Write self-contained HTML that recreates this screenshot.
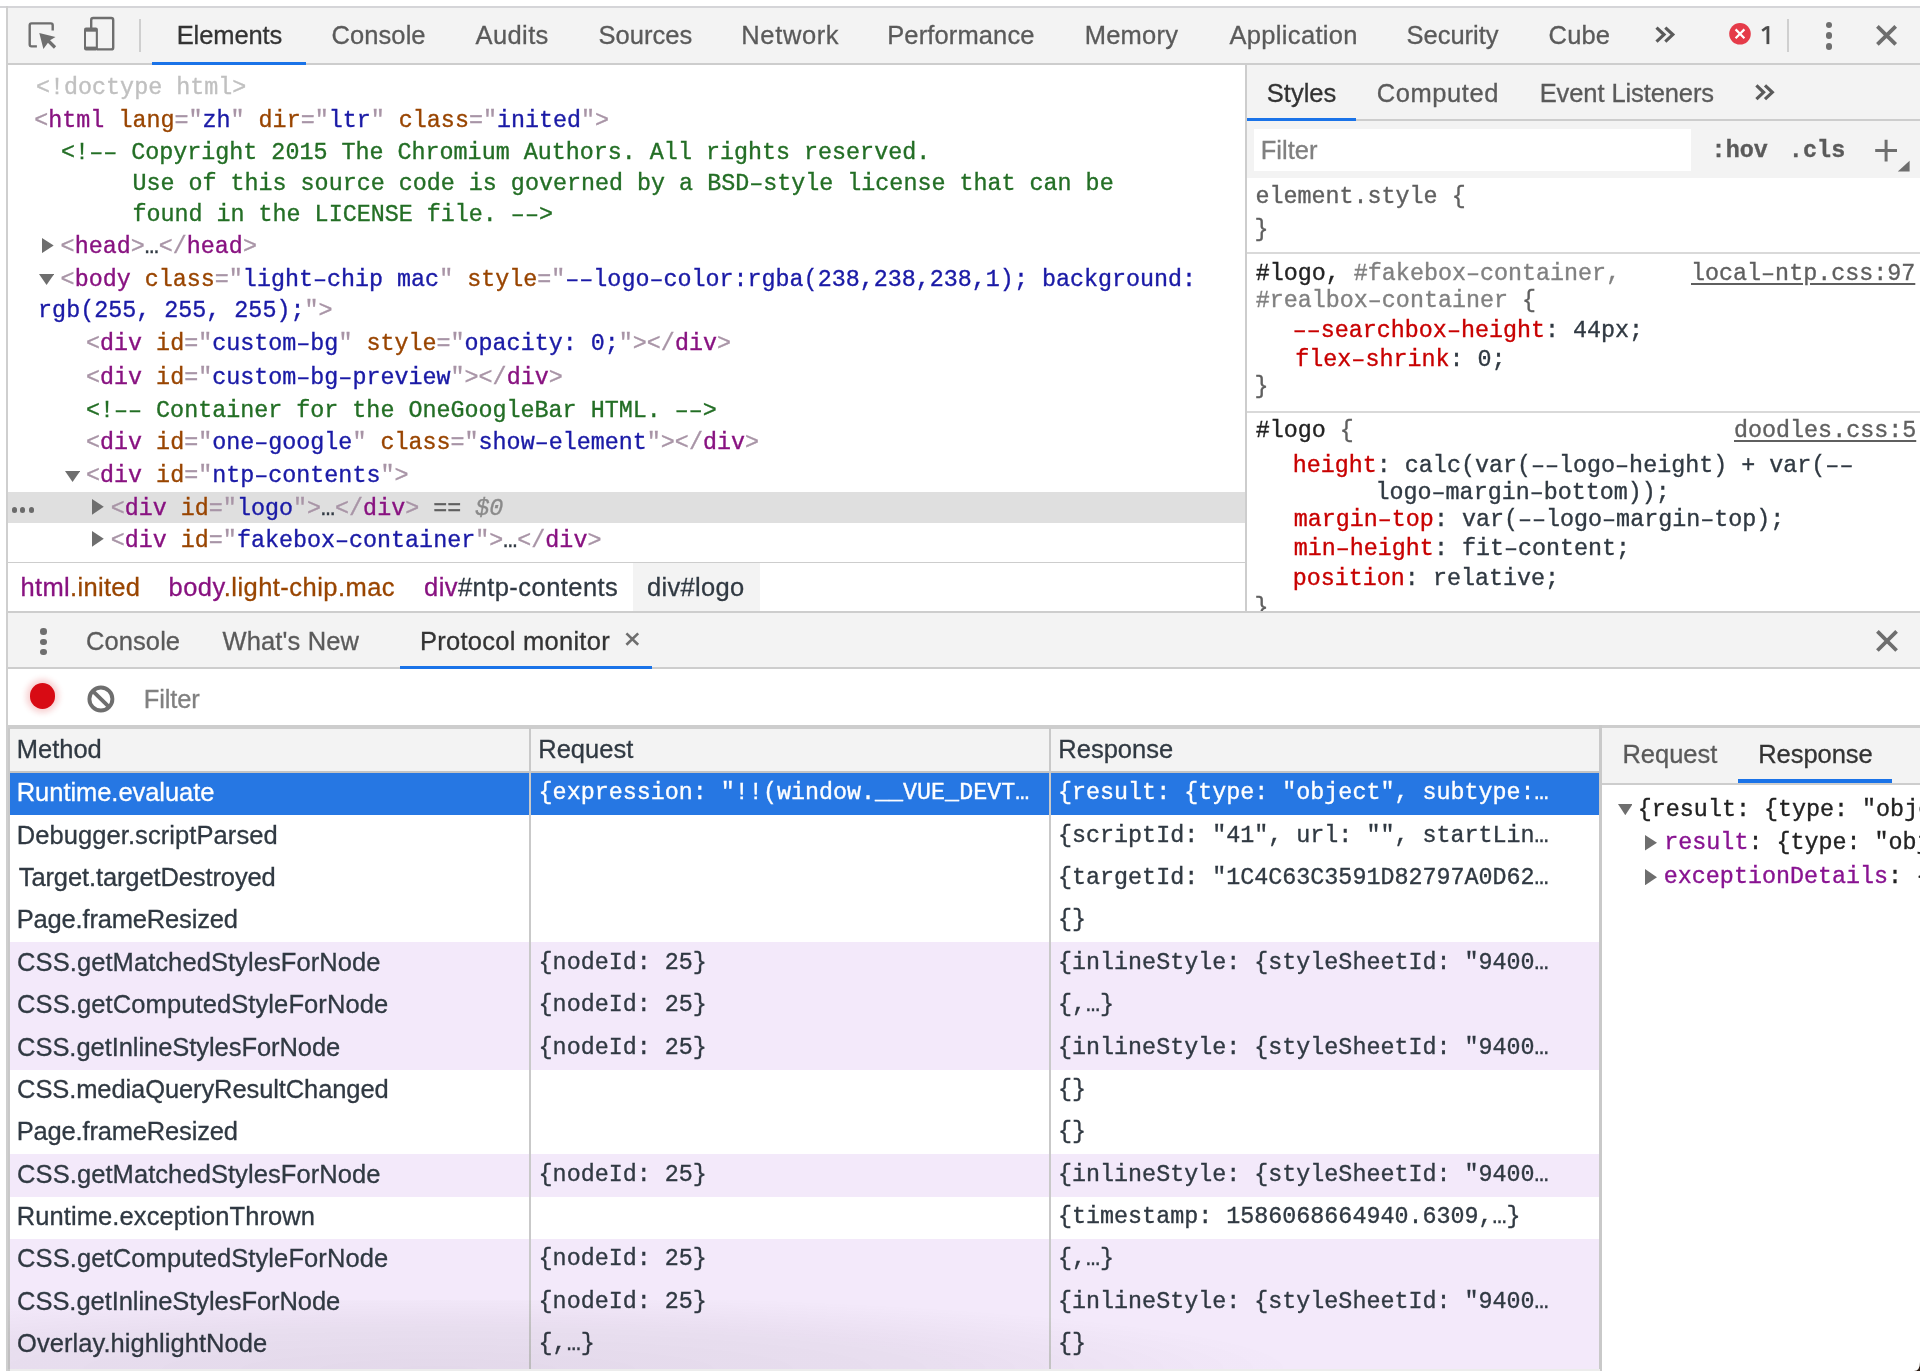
<!DOCTYPE html>
<html><head><meta charset="utf-8"><title>DevTools</title>
<style>
html,body{margin:0;padding:0;width:1920px;height:1371px;overflow:hidden;background:#fff}
body>div,body>svg{position:absolute}
.t{position:absolute;line-height:0;white-space:pre}
.m{-webkit-text-stroke-width:0.35px}
.s{-webkit-text-stroke-width:0.3px}
</style></head><body>
<div style="left:0px;top:0px;width:1920px;height:1371px;background:#ffffff;"></div>
<div style="left:0px;top:6px;width:1920px;height:2px;background:#d5d5d8;"></div>
<div style="left:6px;top:6px;width:2px;height:1365px;background:#cfcfcf;"></div>
<div style="left:8px;top:8px;width:1912px;height:55px;background:#f3f3f3;"></div>
<div style="left:8px;top:63px;width:1912px;height:2px;background:#cdcdcd;"></div>
<div style="left:152px;top:62px;width:154px;height:3px;background:#1a73e8;"></div>
<div style="left:1245px;top:65px;width:2px;height:547px;background:#cdcdcd;"></div>
<div style="left:1247px;top:65px;width:673px;height:54px;background:#f3f3f3;"></div>
<div style="left:1247px;top:119px;width:673px;height:2px;background:#cdcdcd;"></div>
<div style="left:1247px;top:118px;width:109px;height:3px;background:#1a73e8;"></div>
<div style="left:1247px;top:121px;width:673px;height:57px;background:#f3f3f3;"></div>
<div style="left:1254px;top:129px;width:437px;height:42px;background:#ffffff;"></div>
<div style="left:1247px;top:252px;width:673px;height:2px;background:#d9d9d9;"></div>
<div style="left:1247px;top:411px;width:673px;height:2px;background:#d9d9d9;"></div>
<div style="left:8px;top:492px;width:1237px;height:31px;background:#dfdfdf;"></div>
<div style="left:8px;top:561.6px;width:1237px;height:1.7px;background:#cdcdcd;"></div>
<div style="left:633px;top:563px;width:127px;height:48px;background:#f3f3f3;"></div>
<div style="left:8px;top:611px;width:1912px;height:2px;background:#cdcdcd;"></div>
<div style="left:8px;top:613px;width:1912px;height:54px;background:#f3f3f3;"></div>
<div style="left:8px;top:667px;width:1912px;height:2px;background:#cdcdcd;"></div>
<div style="left:400px;top:666px;width:252px;height:3px;background:#1a73e8;"></div>
<div style="left:8px;top:725px;width:1592px;height:4px;background:#cdcdcd;"></div>
<div style="left:1600px;top:725px;width:320px;height:3px;background:#cdcdcd;"></div>
<div style="left:8px;top:728px;width:2px;height:643px;background:#c9c9c9;"></div>
<div style="left:10px;top:729px;width:1590px;height:42px;background:#f3f3f3;"></div>
<div style="left:10px;top:771px;width:1590px;height:2px;background:#c4c4c4;"></div>
<div style="left:10px;top:773px;width:1590px;height:42px;background:#2677e3;"></div>
<div style="left:10px;top:942px;width:1590px;height:43px;background:#f3e9fa;"></div>
<div style="left:10px;top:985px;width:1590px;height:42px;background:#f3e9fa;"></div>
<div style="left:10px;top:1027px;width:1590px;height:43px;background:#f3e9fa;"></div>
<div style="left:10px;top:1154px;width:1590px;height:43px;background:#f3e9fa;"></div>
<div style="left:10px;top:1239px;width:1590px;height:42px;background:#f3e9fa;"></div>
<div style="left:10px;top:1281px;width:1590px;height:43px;background:#f3e9fa;"></div>
<div style="left:10px;top:1324px;width:1590px;height:45px;background:#f3e9fa;"></div>
<div style="left:529px;top:728px;width:2px;height:643px;background:#c9c9c9;"></div>
<div style="left:1049px;top:728px;width:2px;height:643px;background:#c9c9c9;"></div>
<div style="left:1599px;top:725px;width:3px;height:646px;background:#c9c9c9;"></div>
<div style="left:1602px;top:728px;width:318px;height:55px;background:#f3f3f3;"></div>
<div style="left:1602px;top:783px;width:318px;height:2px;background:#cdcdcd;"></div>
<div style="left:1738px;top:779px;width:154px;height:4px;background:#1a73e8;"></div>
<div style="left:139px;top:19px;width:1.5px;height:32.5px;background:#cfcfcf;"></div>
<div style="left:1787.3px;top:19px;width:1.7px;height:32.75px;background:#cfcfcf;"></div>
<div style="left:10px;top:1369px;width:1590px;height:2px;background:#ececec;"></div>
<div id="tx" style="left:0;top:0;width:1920px;height:1371px;will-change:transform">
<div class="t s" style="left:16.75px;top:792.41px;font-family:'Liberation Sans', sans-serif;font-size:25.5px;letter-spacing:-0.05px;"><span style="color:#ffffff;">Runtime.evaluate</span></div>
<div class="t m" style="left:538.60px;top:793.37px;font-family:'Liberation Mono', monospace;font-size:23.36px;"><span style="color:#ffffff;">{expression: &quot;!!(window.__VUE_DEVT…</span></div>
<div class="t m" style="left:1058.00px;top:793.37px;font-family:'Liberation Mono', monospace;font-size:23.36px;"><span style="color:#ffffff;">{result: {type: &quot;object&quot;, subtype:…</span></div>
<div class="t s" style="left:16.75px;top:834.77px;font-family:'Liberation Sans', sans-serif;font-size:25.5px;letter-spacing:0.075px;"><span style="color:rgb(48,57,66);">Debugger.scriptParsed</span></div>
<div class="t m" style="left:1058.00px;top:835.73px;font-family:'Liberation Mono', monospace;font-size:23.36px;"><span style="color:rgb(48,57,66);">{scriptId: &quot;41&quot;, url: &quot;&quot;, startLin…</span></div>
<div class="t s" style="left:18.75px;top:877.13px;font-family:'Liberation Sans', sans-serif;font-size:25.5px;letter-spacing:-0.112px;"><span style="color:rgb(48,57,66);">Target.targetDestroyed</span></div>
<div class="t m" style="left:1058.00px;top:878.09px;font-family:'Liberation Mono', monospace;font-size:23.36px;"><span style="color:rgb(48,57,66);">{targetId: &quot;1C4C63C3591D82797A0D62…</span></div>
<div class="t s" style="left:16.75px;top:919.49px;font-family:'Liberation Sans', sans-serif;font-size:25.5px;letter-spacing:-0.172px;"><span style="color:rgb(48,57,66);">Page.frameResized</span></div>
<div class="t m" style="left:1058.00px;top:920.45px;font-family:'Liberation Mono', monospace;font-size:23.36px;"><span style="color:rgb(48,57,66);">{}</span></div>
<div class="t s" style="left:17.10px;top:961.85px;font-family:'Liberation Sans', sans-serif;font-size:25.5px;letter-spacing:0.073px;"><span style="color:rgb(48,57,66);">CSS.getMatchedStylesForNode</span></div>
<div class="t m" style="left:538.60px;top:962.81px;font-family:'Liberation Mono', monospace;font-size:23.36px;"><span style="color:rgb(48,57,66);">{nodeId: 25}</span></div>
<div class="t m" style="left:1058.00px;top:962.81px;font-family:'Liberation Mono', monospace;font-size:23.36px;"><span style="color:rgb(48,57,66);">{inlineStyle: {styleSheetId: &quot;9400…</span></div>
<div class="t s" style="left:17.10px;top:1004.21px;font-family:'Liberation Sans', sans-serif;font-size:25.5px;letter-spacing:0.1px;"><span style="color:rgb(48,57,66);">CSS.getComputedStyleForNode</span></div>
<div class="t m" style="left:538.60px;top:1005.17px;font-family:'Liberation Mono', monospace;font-size:23.36px;"><span style="color:rgb(48,57,66);">{nodeId: 25}</span></div>
<div class="t m" style="left:1058.00px;top:1005.17px;font-family:'Liberation Mono', monospace;font-size:23.36px;"><span style="color:rgb(48,57,66);">{,…}</span></div>
<div class="t s" style="left:17.10px;top:1046.57px;font-family:'Liberation Sans', sans-serif;font-size:25.5px;letter-spacing:-0.056px;"><span style="color:rgb(48,57,66);">CSS.getInlineStylesForNode</span></div>
<div class="t m" style="left:538.60px;top:1047.53px;font-family:'Liberation Mono', monospace;font-size:23.36px;"><span style="color:rgb(48,57,66);">{nodeId: 25}</span></div>
<div class="t m" style="left:1058.00px;top:1047.53px;font-family:'Liberation Mono', monospace;font-size:23.36px;"><span style="color:rgb(48,57,66);">{inlineStyle: {styleSheetId: &quot;9400…</span></div>
<div class="t s" style="left:17.10px;top:1088.93px;font-family:'Liberation Sans', sans-serif;font-size:25.5px;letter-spacing:-0.1px;"><span style="color:rgb(48,57,66);">CSS.mediaQueryResultChanged</span></div>
<div class="t m" style="left:1058.00px;top:1089.89px;font-family:'Liberation Mono', monospace;font-size:23.36px;"><span style="color:rgb(48,57,66);">{}</span></div>
<div class="t s" style="left:16.75px;top:1131.29px;font-family:'Liberation Sans', sans-serif;font-size:25.5px;letter-spacing:-0.172px;"><span style="color:rgb(48,57,66);">Page.frameResized</span></div>
<div class="t m" style="left:1058.00px;top:1132.25px;font-family:'Liberation Mono', monospace;font-size:23.36px;"><span style="color:rgb(48,57,66);">{}</span></div>
<div class="t s" style="left:17.10px;top:1173.65px;font-family:'Liberation Sans', sans-serif;font-size:25.5px;letter-spacing:0.073px;"><span style="color:rgb(48,57,66);">CSS.getMatchedStylesForNode</span></div>
<div class="t m" style="left:538.60px;top:1174.61px;font-family:'Liberation Mono', monospace;font-size:23.36px;"><span style="color:rgb(48,57,66);">{nodeId: 25}</span></div>
<div class="t m" style="left:1058.00px;top:1174.61px;font-family:'Liberation Mono', monospace;font-size:23.36px;"><span style="color:rgb(48,57,66);">{inlineStyle: {styleSheetId: &quot;9400…</span></div>
<div class="t s" style="left:16.75px;top:1216.01px;font-family:'Liberation Sans', sans-serif;font-size:25.5px;letter-spacing:0.091px;"><span style="color:rgb(48,57,66);">Runtime.exceptionThrown</span></div>
<div class="t m" style="left:1058.00px;top:1216.97px;font-family:'Liberation Mono', monospace;font-size:23.36px;"><span style="color:rgb(48,57,66);">{timestamp: 1586068664940.6309,…}</span></div>
<div class="t s" style="left:17.10px;top:1258.37px;font-family:'Liberation Sans', sans-serif;font-size:25.5px;letter-spacing:0.1px;"><span style="color:rgb(48,57,66);">CSS.getComputedStyleForNode</span></div>
<div class="t m" style="left:538.60px;top:1259.33px;font-family:'Liberation Mono', monospace;font-size:23.36px;"><span style="color:rgb(48,57,66);">{nodeId: 25}</span></div>
<div class="t m" style="left:1058.00px;top:1259.33px;font-family:'Liberation Mono', monospace;font-size:23.36px;"><span style="color:rgb(48,57,66);">{,…}</span></div>
<div class="t s" style="left:17.10px;top:1300.73px;font-family:'Liberation Sans', sans-serif;font-size:25.5px;letter-spacing:-0.056px;"><span style="color:rgb(48,57,66);">CSS.getInlineStylesForNode</span></div>
<div class="t m" style="left:538.60px;top:1301.69px;font-family:'Liberation Mono', monospace;font-size:23.36px;"><span style="color:rgb(48,57,66);">{nodeId: 25}</span></div>
<div class="t m" style="left:1058.00px;top:1301.69px;font-family:'Liberation Mono', monospace;font-size:23.36px;"><span style="color:rgb(48,57,66);">{inlineStyle: {styleSheetId: &quot;9400…</span></div>
<div class="t s" style="left:17.10px;top:1343.09px;font-family:'Liberation Sans', sans-serif;font-size:25.5px;letter-spacing:0.055px;"><span style="color:rgb(48,57,66);">Overlay.highlightNode</span></div>
<div class="t m" style="left:538.60px;top:1344.05px;font-family:'Liberation Mono', monospace;font-size:23.36px;"><span style="color:rgb(48,57,66);">{,…}</span></div>
<div class="t m" style="left:1058.00px;top:1344.05px;font-family:'Liberation Mono', monospace;font-size:23.36px;"><span style="color:rgb(48,57,66);">{}</span></div>
<div class="t s" style="left:176.70px;top:34.96px;font-family:'Liberation Sans', sans-serif;font-size:25.5px;letter-spacing:-0.1px;"><span style="color:#333333;">Elements</span></div>
<div class="t s" style="left:331.50px;top:34.96px;font-family:'Liberation Sans', sans-serif;font-size:25.5px;letter-spacing:0.083px;"><span style="color:#5a5a5a;">Console</span></div>
<div class="t s" style="left:475.60px;top:34.96px;font-family:'Liberation Sans', sans-serif;font-size:25.5px;letter-spacing:0.38px;"><span style="color:#5a5a5a;">Audits</span></div>
<div class="t s" style="left:598.60px;top:34.96px;font-family:'Liberation Sans', sans-serif;font-size:25.5px;letter-spacing:0.017px;"><span style="color:#5a5a5a;">Sources</span></div>
<div class="t s" style="left:741.30px;top:34.96px;font-family:'Liberation Sans', sans-serif;font-size:25.5px;letter-spacing:0.633px;"><span style="color:#5a5a5a;">Network</span></div>
<div class="t s" style="left:887.20px;top:34.96px;font-family:'Liberation Sans', sans-serif;font-size:25.5px;letter-spacing:0.13px;"><span style="color:#5a5a5a;">Performance</span></div>
<div class="t s" style="left:1084.70px;top:34.96px;font-family:'Liberation Sans', sans-serif;font-size:25.5px;letter-spacing:0.24px;"><span style="color:#5a5a5a;">Memory</span></div>
<div class="t s" style="left:1229.40px;top:34.96px;font-family:'Liberation Sans', sans-serif;font-size:25.5px;letter-spacing:0.34px;"><span style="color:#5a5a5a;">Application</span></div>
<div class="t s" style="left:1406.50px;top:34.96px;font-family:'Liberation Sans', sans-serif;font-size:25.5px;"><span style="color:#5a5a5a;">Security</span></div>
<div class="t s" style="left:1548.60px;top:34.96px;font-family:'Liberation Sans', sans-serif;font-size:25.5px;letter-spacing:0.133px;"><span style="color:#5a5a5a;">Cube</span></div>
<div class="t s" style="left:1266.80px;top:92.76px;font-family:'Liberation Sans', sans-serif;font-size:25.5px;"><span style="color:#333333;">Styles</span></div>
<div class="t s" style="left:1376.70px;top:92.76px;font-family:'Liberation Sans', sans-serif;font-size:25.5px;letter-spacing:0.586px;"><span style="color:#5a5a5a;">Computed</span></div>
<div class="t s" style="left:1539.70px;top:92.76px;font-family:'Liberation Sans', sans-serif;font-size:25.5px;letter-spacing:-0.1px;"><span style="color:#5a5a5a;">Event Listeners</span></div>
<div class="t s" style="left:1260.80px;top:150.16px;font-family:'Liberation Sans', sans-serif;font-size:25.5px;"><span style="color:#808080;">Filter</span></div>
<div class="t m" style="left:1711.60px;top:151.07px;font-family:'Liberation Mono', monospace;font-size:23.36px;font-weight:bold;letter-spacing:0.067px;"><span style="color:#5a5a5a;">:hov</span></div>
<div class="t m" style="left:1788.80px;top:151.07px;font-family:'Liberation Mono', monospace;font-size:23.36px;font-weight:bold;letter-spacing:0.1px;"><span style="color:#5a5a5a;">.cls</span></div>
<div class="t m" style="left:36.00px;top:87.87px;font-family:'Liberation Mono', monospace;font-size:23.36px;"><span style="color:rgb(192,192,192);">&lt;!doctype html&gt;</span></div>
<div class="t m" style="left:34.25px;top:120.67px;font-family:'Liberation Mono', monospace;font-size:23.36px;"><span style="color:rgb(168,148,166);">&lt;</span><span style="color:rgb(136,18,128);">html</span><span style="color:rgb(153,69,0);"> lang</span><span style="color:rgb(168,148,166);">=&quot;</span><span style="color:rgb(26,26,166);">zh</span><span style="color:rgb(168,148,166);">&quot;</span><span style="color:rgb(153,69,0);"> dir</span><span style="color:rgb(168,148,166);">=&quot;</span><span style="color:rgb(26,26,166);">ltr</span><span style="color:rgb(168,148,166);">&quot;</span><span style="color:rgb(153,69,0);"> class</span><span style="color:rgb(168,148,166);">=&quot;</span><span style="color:rgb(26,26,166);">inited</span><span style="color:rgb(168,148,166);">&quot;</span><span style="color:rgb(168,148,166);">&gt;</span></div>
<div class="t m" style="left:61.10px;top:153.07px;font-family:'Liberation Mono', monospace;font-size:23.36px;"><span style="color:rgb(35,110,37);">&lt;!–– Copyright 2015 The Chromium Authors. All rights reserved.</span></div>
<div class="t m" style="left:132.40px;top:183.57px;font-family:'Liberation Mono', monospace;font-size:23.36px;"><span style="color:rgb(35,110,37);">Use of this source code is governed by a BSD–style license that can be</span></div>
<div class="t m" style="left:132.40px;top:214.67px;font-family:'Liberation Mono', monospace;font-size:23.36px;"><span style="color:rgb(35,110,37);">found in the LICENSE file. ––&gt;</span></div>
<div class="t m" style="left:60.60px;top:247.37px;font-family:'Liberation Mono', monospace;font-size:23.36px;"><span style="color:rgb(168,148,166);">&lt;</span><span style="color:rgb(136,18,128);">head</span><span style="color:rgb(168,148,166);">&gt;</span><span style="color:rgb(48,57,66);">…</span><span style="color:rgb(168,148,166);">&lt;/</span><span style="color:rgb(136,18,128);">head</span><span style="color:rgb(168,148,166);">&gt;</span></div>
<div class="t m" style="left:60.60px;top:280.27px;font-family:'Liberation Mono', monospace;font-size:23.36px;"><span style="color:rgb(168,148,166);">&lt;</span><span style="color:rgb(136,18,128);">body</span><span style="color:rgb(153,69,0);"> class</span><span style="color:rgb(168,148,166);">=&quot;</span><span style="color:rgb(26,26,166);">light–chip mac</span><span style="color:rgb(168,148,166);">&quot;</span><span style="color:rgb(168,148,166);"></span><span style="color:rgb(153,69,0);"> style</span><span style="color:rgb(168,148,166);">=&quot;</span><span style="color:rgb(26,26,166);">––logo–color:rgba(238,238,238,1); background:</span></div>
<div class="t m" style="left:38.10px;top:310.77px;font-family:'Liberation Mono', monospace;font-size:23.36px;"><span style="color:rgb(26,26,166);">rgb(255, 255, 255);</span><span style="color:rgb(168,148,166);">&quot;</span><span style="color:rgb(168,148,166);">&gt;</span></div>
<div class="t m" style="left:86.00px;top:343.57px;font-family:'Liberation Mono', monospace;font-size:23.36px;"><span style="color:rgb(168,148,166);">&lt;</span><span style="color:rgb(136,18,128);">div</span><span style="color:rgb(153,69,0);"> id</span><span style="color:rgb(168,148,166);">=&quot;</span><span style="color:rgb(26,26,166);">custom–bg</span><span style="color:rgb(168,148,166);">&quot;</span><span style="color:rgb(153,69,0);"> style</span><span style="color:rgb(168,148,166);">=&quot;</span><span style="color:rgb(26,26,166);">opacity: 0;</span><span style="color:rgb(168,148,166);">&quot;</span><span style="color:rgb(168,148,166);">&gt;</span><span style="color:rgb(168,148,166);">&lt;/</span><span style="color:rgb(136,18,128);">div</span><span style="color:rgb(168,148,166);">&gt;</span></div>
<div class="t m" style="left:86.00px;top:377.97px;font-family:'Liberation Mono', monospace;font-size:23.36px;"><span style="color:rgb(168,148,166);">&lt;</span><span style="color:rgb(136,18,128);">div</span><span style="color:rgb(153,69,0);"> id</span><span style="color:rgb(168,148,166);">=&quot;</span><span style="color:rgb(26,26,166);">custom–bg–preview</span><span style="color:rgb(168,148,166);">&quot;</span><span style="color:rgb(168,148,166);">&gt;</span><span style="color:rgb(168,148,166);">&lt;/</span><span style="color:rgb(136,18,128);">div</span><span style="color:rgb(168,148,166);">&gt;</span></div>
<div class="t m" style="left:86.00px;top:410.67px;font-family:'Liberation Mono', monospace;font-size:23.36px;"><span style="color:rgb(35,110,37);">&lt;!–– Container for the OneGoogleBar HTML. ––&gt;</span></div>
<div class="t m" style="left:86.00px;top:443.37px;font-family:'Liberation Mono', monospace;font-size:23.36px;"><span style="color:rgb(168,148,166);">&lt;</span><span style="color:rgb(136,18,128);">div</span><span style="color:rgb(153,69,0);"> id</span><span style="color:rgb(168,148,166);">=&quot;</span><span style="color:rgb(26,26,166);">one–google</span><span style="color:rgb(168,148,166);">&quot;</span><span style="color:rgb(153,69,0);"> class</span><span style="color:rgb(168,148,166);">=&quot;</span><span style="color:rgb(26,26,166);">show–element</span><span style="color:rgb(168,148,166);">&quot;</span><span style="color:rgb(168,148,166);">&gt;</span><span style="color:rgb(168,148,166);">&lt;/</span><span style="color:rgb(136,18,128);">div</span><span style="color:rgb(168,148,166);">&gt;</span></div>
<div class="t m" style="left:86.00px;top:476.07px;font-family:'Liberation Mono', monospace;font-size:23.36px;"><span style="color:rgb(168,148,166);">&lt;</span><span style="color:rgb(136,18,128);">div</span><span style="color:rgb(153,69,0);"> id</span><span style="color:rgb(168,148,166);">=&quot;</span><span style="color:rgb(26,26,166);">ntp–contents</span><span style="color:rgb(168,148,166);">&quot;</span><span style="color:rgb(168,148,166);">&gt;</span></div>
<div class="t m" style="left:110.70px;top:508.97px;font-family:'Liberation Mono', monospace;font-size:23.36px;"><span style="color:rgb(168,148,166);">&lt;</span><span style="color:rgb(136,18,128);">div</span><span style="color:rgb(153,69,0);"> id</span><span style="color:rgb(168,148,166);">=&quot;</span><span style="color:rgb(26,26,166);">logo</span><span style="color:rgb(168,148,166);">&quot;</span><span style="color:rgb(168,148,166);">&gt;</span><span style="color:rgb(48,57,66);">…</span><span style="color:rgb(168,148,166);">&lt;/</span><span style="color:rgb(136,18,128);">div</span><span style="color:rgb(168,148,166);">&gt;</span><span style="color:#5f5f5f;"> == </span><span style="color:#8a8a8a;font-style:italic">$0</span></div>
<div class="t m" style="left:110.70px;top:541.07px;font-family:'Liberation Mono', monospace;font-size:23.36px;"><span style="color:rgb(168,148,166);">&lt;</span><span style="color:rgb(136,18,128);">div</span><span style="color:rgb(153,69,0);"> id</span><span style="color:rgb(168,148,166);">=&quot;</span><span style="color:rgb(26,26,166);">fakebox–container</span><span style="color:rgb(168,148,166);">&quot;</span><span style="color:rgb(168,148,166);">&gt;</span><span style="color:rgb(48,57,66);">…</span><span style="color:rgb(168,148,166);">&lt;/</span><span style="color:rgb(136,18,128);">div</span><span style="color:rgb(168,148,166);">&gt;</span></div>
<div class="t s" style="left:20.50px;top:587.16px;font-family:'Liberation Sans', sans-serif;font-size:25.5px;letter-spacing:0.325px;"><span style="color:rgb(136,18,128);">html</span><span style="color:rgb(153,69,0);">.inited</span></div>
<div class="t s" style="left:168.50px;top:587.16px;font-family:'Liberation Sans', sans-serif;font-size:25.5px;letter-spacing:0.458px;"><span style="color:rgb(136,18,128);">body</span><span style="color:rgb(153,69,0);">.light-chip.mac</span></div>
<div class="t s" style="left:424.00px;top:587.16px;font-family:'Liberation Sans', sans-serif;font-size:25.5px;letter-spacing:0.447px;"><span style="color:rgb(136,18,128);">div</span><span style="color:rgb(48,57,66);">#ntp-contents</span></div>
<div class="t s" style="left:647.00px;top:587.16px;font-family:'Liberation Sans', sans-serif;font-size:25.5px;letter-spacing:0.329px;"><span style="color:rgb(48,57,66);">div#logo</span></div>
<div class="t m" style="left:1255.40px;top:197.27px;font-family:'Liberation Mono', monospace;font-size:23.36px;"><span style="color:#5f5f5f;">element.style {</span></div>
<div class="t m" style="left:1254.40px;top:229.77px;font-family:'Liberation Mono', monospace;font-size:23.36px;"><span style="color:#5f5f5f;">}</span></div>
<div class="t m" style="left:1255.70px;top:273.97px;font-family:'Liberation Mono', monospace;font-size:23.36px;"><span style="color:#222222;">#logo,</span><span style="color:#808080;"> #fakebox–container,</span></div>
<div class="t m" style="left:1255.70px;top:300.77px;font-family:'Liberation Mono', monospace;font-size:23.36px;"><span style="color:#808080;">#realbox–container</span><span style="color:#5f5f5f;"> {</span></div>
<div class="t m" style="left:1691.00px;top:274.37px;font-family:'Liberation Mono', monospace;font-size:23.36px;"><span style="color:#5f5f5f;text-decoration:underline;text-underline-offset:3px">local–ntp.css:97</span></div>
<div class="t m" style="left:1292.70px;top:330.97px;font-family:'Liberation Mono', monospace;font-size:23.36px;"><span style="color:rgb(200,0,0);">––searchbox–height</span><span style="color:rgb(48,57,66);">: 44px;</span></div>
<div class="t m" style="left:1295.30px;top:359.57px;font-family:'Liberation Mono', monospace;font-size:23.36px;"><span style="color:rgb(200,0,0);">flex–shrink</span><span style="color:rgb(48,57,66);">: 0;</span></div>
<div class="t m" style="left:1254.40px;top:387.27px;font-family:'Liberation Mono', monospace;font-size:23.36px;"><span style="color:#5f5f5f;">}</span></div>
<div class="t m" style="left:1255.70px;top:431.27px;font-family:'Liberation Mono', monospace;font-size:23.36px;"><span style="color:#222222;">#logo</span><span style="color:#5f5f5f;"> {</span></div>
<div class="t m" style="left:1734.00px;top:431.27px;font-family:'Liberation Mono', monospace;font-size:23.36px;"><span style="color:#5f5f5f;text-decoration:underline;text-underline-offset:3px">doodles.css:5</span></div>
<div class="t m" style="left:1292.70px;top:466.27px;font-family:'Liberation Mono', monospace;font-size:23.36px;"><span style="color:rgb(200,0,0);">height</span><span style="color:rgb(48,57,66);">: calc(var(––logo–height) + var(––</span></div>
<div class="t m" style="left:1375.50px;top:492.77px;font-family:'Liberation Mono', monospace;font-size:23.36px;"><span style="color:rgb(48,57,66);">logo–margin–bottom));</span></div>
<div class="t m" style="left:1293.70px;top:519.57px;font-family:'Liberation Mono', monospace;font-size:23.36px;"><span style="color:rgb(200,0,0);">margin–top</span><span style="color:rgb(48,57,66);">: var(––logo–margin–top);</span></div>
<div class="t m" style="left:1293.70px;top:548.97px;font-family:'Liberation Mono', monospace;font-size:23.36px;"><span style="color:rgb(200,0,0);">min–height</span><span style="color:rgb(48,57,66);">: fit–content;</span></div>
<div class="t m" style="left:1292.70px;top:579.17px;font-family:'Liberation Mono', monospace;font-size:23.36px;"><span style="color:rgb(200,0,0);">position</span><span style="color:rgb(48,57,66);">: relative;</span></div>
<div style="position:absolute;left:1247px;top:421px;width:673px;height:190px;overflow:hidden"><div class="t m" style="left:7.40px;top:187.27px;font-family:'Liberation Mono', monospace;font-size:23.36px;"><span style="color:#5f5f5f;">}</span></div></div>
<div class="t s" style="left:86.00px;top:641.16px;font-family:'Liberation Sans', sans-serif;font-size:25.5px;letter-spacing:0.083px;"><span style="color:#5a5a5a;">Console</span></div>
<div class="t s" style="left:222.50px;top:641.16px;font-family:'Liberation Sans', sans-serif;font-size:25.5px;letter-spacing:0.139px;"><span style="color:#5a5a5a;">What&#x27;s New</span></div>
<div class="t s" style="left:419.90px;top:640.56px;font-family:'Liberation Sans', sans-serif;font-size:25.5px;letter-spacing:0.273px;"><span style="color:#333333;">Protocol monitor</span></div>
<div class="t s" style="left:143.75px;top:698.66px;font-family:'Liberation Sans', sans-serif;font-size:25.5px;letter-spacing:-0.15px;"><span style="color:#808080;">Filter</span></div>
<div class="t s" style="left:16.75px;top:748.66px;font-family:'Liberation Sans', sans-serif;font-size:25.5px;"><span style="color:rgb(48,57,66);">Method</span></div>
<div class="t s" style="left:538.25px;top:748.66px;font-family:'Liberation Sans', sans-serif;font-size:25.5px;"><span style="color:rgb(48,57,66);">Request</span></div>
<div class="t s" style="left:1058.30px;top:748.66px;font-family:'Liberation Sans', sans-serif;font-size:25.5px;"><span style="color:rgb(48,57,66);">Response</span></div>
<div class="t s" style="left:1622.40px;top:753.76px;font-family:'Liberation Sans', sans-serif;font-size:25.5px;"><span style="color:#5a5a5a;">Request</span></div>
<div class="t s" style="left:1758.20px;top:753.76px;font-family:'Liberation Sans', sans-serif;font-size:25.5px;letter-spacing:-0.043px;"><span style="color:#333333;">Response</span></div>
<div class="t m" style="left:1637.80px;top:810.02px;font-family:'Liberation Mono', monospace;font-size:23.36px;"><span style="color:#222222;">{result: {type: &quot;object&quot;, subtype: &quot;error&quot;}</span></div>
<div class="t m" style="left:1664.30px;top:842.67px;font-family:'Liberation Mono', monospace;font-size:23.36px;"><span style="color:rgb(136,19,145);">result</span><span style="color:#222222;">: {type: &quot;object&quot;, subtype: &quot;error&quot;}</span></div>
<div class="t m" style="left:1663.80px;top:877.07px;font-family:'Liberation Mono', monospace;font-size:23.36px;"><span style="color:rgb(136,19,145);">exceptionDetails</span><span style="color:#222222;">: {exceptionId: 1}</span></div>
</div>
<svg style="left:1760px;top:24px" width="12" height="22" viewBox="1760 24 12 22"><path d="M1762.2 30.8 L1766.9 27.2" fill="none" stroke="#4a4a4a" stroke-width="2.6"/><rect x="1766.5" y="26.1" width="2.8" height="18" fill="#4a4a4a"/></svg>
<svg style="left:42.3px;top:237.7px" width="11.700000000000003" height="15.100000000000023" viewBox="0 0 11.700000000000003 15.100000000000023"><polygon points="0,0 11.700000000000003,7.550000000000011 0,15.100000000000023" fill="#6e6e6e"/></svg>
<svg style="left:39.4px;top:274.3px" width="15.100000000000001" height="10.899999999999977" viewBox="0 0 15.100000000000001 10.899999999999977"><polygon points="0,0 15.100000000000001,0 7.550000000000001,10.899999999999977" fill="#6e6e6e"/></svg>
<svg style="left:64.6px;top:471.3px" width="15.100000000000009" height="10.899999999999977" viewBox="0 0 15.100000000000009 10.899999999999977"><polygon points="0,0 15.100000000000009,0 7.550000000000004,10.899999999999977" fill="#6e6e6e"/></svg>
<svg style="left:92.2px;top:499px" width="11.799999999999997" height="15.700000000000045" viewBox="0 0 11.799999999999997 15.700000000000045"><polygon points="0,0 11.799999999999997,7.850000000000023 0,15.700000000000045" fill="#6e6e6e"/></svg>
<svg style="left:92.2px;top:531.1px" width="11.799999999999997" height="15.699999999999932" viewBox="0 0 11.799999999999997 15.699999999999932"><polygon points="0,0 11.799999999999997,7.849999999999966 0,15.699999999999932" fill="#6e6e6e"/></svg>
<div style="left:11.55px;top:507.3px;width:5.4px;height:5.4px;border-radius:50%;background:#6b6b6b"></div>
<div style="left:19.900000000000002px;top:507.3px;width:5.4px;height:5.4px;border-radius:50%;background:#6b6b6b"></div>
<div style="left:28.55px;top:507.3px;width:5.4px;height:5.4px;border-radius:50%;background:#6b6b6b"></div>
<svg style="left:1617.5px;top:804.2px" width="14.599999999999909" height="11.199999999999932" viewBox="0 0 14.599999999999909 11.199999999999932"><polygon points="0,0 14.599999999999909,0 7.2999999999999545,11.199999999999932" fill="#6e6e6e"/></svg>
<svg style="left:1645px;top:835.2px" width="12" height="15.399999999999977" viewBox="0 0 12 15.399999999999977"><polygon points="0,0 12,7.699999999999989 0,15.399999999999977" fill="#6e6e6e"/></svg>
<svg style="left:1645px;top:868.7px" width="12" height="16.299999999999955" viewBox="0 0 12 16.299999999999955"><polygon points="0,0 12,8.149999999999977 0,16.299999999999955" fill="#6e6e6e"/></svg>
<svg style="left:20px;top:10px" width="50" height="50" viewBox="20 10 50 50">
<path d="M36.9 46.4 H31.5 Q29.7 46.4 29.7 44.6 V25.2 Q29.7 23.4 31.5 23.4 H50.9 Q52.7 23.4 52.7 25.2 V30.6" fill="none" stroke="#6e6e6e" stroke-width="2.4"/>
<polygon points="39.3,33 55.5,37.1 49.6,40.6 43.4,48.9" fill="#6e6e6e"/>
<line x1="47" y1="39.5" x2="55" y2="47.5" stroke="#6e6e6e" stroke-width="3.2"/>
</svg>
<svg style="left:80px;top:12px" width="40" height="42" viewBox="80 12 40 42">
<path d="M91.2 28 V20 Q91.2 18 93.2 18 H111.2 Q113.2 18 113.2 20 V47.4 Q113.2 49.4 111.2 49.4 H97" fill="none" stroke="#6e6e6e" stroke-width="2.4"/>
<rect x="84" y="27.6" width="13.9" height="23" rx="2" fill="#6e6e6e"/>
<rect x="86" y="31.7" width="9.8" height="14.9" fill="#f3f3f3"/>
</svg>
<svg style="left:0;top:0;overflow:visible" width="1" height="1"><path d="M1656.5 27.6 L1664 34.6 L1656.5 41.6 M1665.3 27.6 L1672.8 34.6 L1665.3 41.6" fill="none" stroke="#5a5a5a" stroke-width="3.2"/></svg>
<svg style="left:0;top:0;overflow:visible" width="1" height="1"><path d="M1756.4 85.4 L1763.6 92.3 L1756.4 99.2 M1765 85.4 L1772.3 92.3 L1765 99.2" fill="none" stroke="#5a5a5a" stroke-width="3.2"/></svg>
<svg style="left:1729px;top:23px" width="22" height="22" viewBox="0 0 22 22">
<circle cx="11" cy="10.8" r="10.8" fill="#e53b49"/>
<path d="M6.6 6.4 L15.4 15.2 M15.4 6.4 L6.6 15.2" stroke="#fff" stroke-width="2.2"/></svg>
<div style="left:1825.6000000000001px;top:21.9px;width:6.6px;height:6.6px;border-radius:50%;background:#6e6e6e"></div>
<div style="left:1825.6000000000001px;top:32.400000000000006px;width:6.6px;height:6.6px;border-radius:50%;background:#6e6e6e"></div>
<div style="left:1825.6000000000001px;top:43.300000000000004px;width:6.6px;height:6.6px;border-radius:50%;background:#6e6e6e"></div>
<svg style="left:1876.3px;top:24.8px;overflow:visible" width="21.100000000000136" height="20.8" viewBox="0 0 21.100000000000136 20.8"><path d="M1.4 1.4 L19.700000000000138 19.400000000000002 M19.700000000000138 1.4 L1.4 19.400000000000002" stroke="#6e6e6e" stroke-width="3.8"/></svg>
<svg style="left:1875.7px;top:629.7px;overflow:visible" width="22.0" height="21.899999999999977" viewBox="0 0 22.0 21.899999999999977"><path d="M1.4 1.4 L20.6 20.49999999999998 M20.6 1.4 L1.4 20.49999999999998" stroke="#6e6e6e" stroke-width="3.8"/></svg>
<svg style="left:624.6px;top:631.6px;overflow:visible" width="14.600000000000023" height="14.100000000000023" viewBox="0 0 14.600000000000023 14.100000000000023"><path d="M1.4 1.4 L13.200000000000022 12.700000000000022 M13.200000000000022 1.4 L1.4 12.700000000000022" stroke="#6e6e6e" stroke-width="2.6"/></svg>
<div style="left:40.0px;top:628.0px;width:6.5px;height:6.5px;border-radius:50%;background:#6e6e6e"></div>
<div style="left:40.0px;top:638.75px;width:6.5px;height:6.5px;border-radius:50%;background:#6e6e6e"></div>
<div style="left:40.0px;top:648.75px;width:6.5px;height:6.5px;border-radius:50%;background:#6e6e6e"></div>
<div style="left:29.6px;top:683.4px;width:25.2px;height:25.2px;border-radius:50%;background:#d80b14;box-shadow:0 0 6px 3.5px rgba(217,11,17,0.2)"></div>
<svg style="left:86px;top:684px" width="30" height="30" viewBox="0 0 30 30">
<circle cx="14.9" cy="15" r="11.5" fill="none" stroke="#6e6e6e" stroke-width="3.9"/>
<line x1="6.6" y1="6.8" x2="23.2" y2="23.2" stroke="#6e6e6e" stroke-width="3.9"/></svg>
<svg style="left:1870px;top:135px" width="45" height="40" viewBox="1870 135 45 40">
<path d="M1886.1 139.7 V161.5 M1875.2 150.6 H1897" stroke="#6e6e6e" stroke-width="3"/>
<polygon points="1909.6,160.7 1909.6,171.6 1897.8,171.6" fill="#6e6e6e"/></svg>
<div style="left:8px;top:1300px;width:1592px;height:69px;background:radial-gradient(ellipse 860px 75px at 430px 69px, rgba(40,20,40,0.075) 0%, rgba(40,20,40,0.05) 55%, rgba(40,20,40,0) 100%)"></div>
<svg style="left:1908px;top:1359px" width="12" height="12" viewBox="0 0 12 12"><path d="M12 3 Q12 12 6 12 L12 12 Z" fill="#2b1d14"/></svg>
</body></html>
